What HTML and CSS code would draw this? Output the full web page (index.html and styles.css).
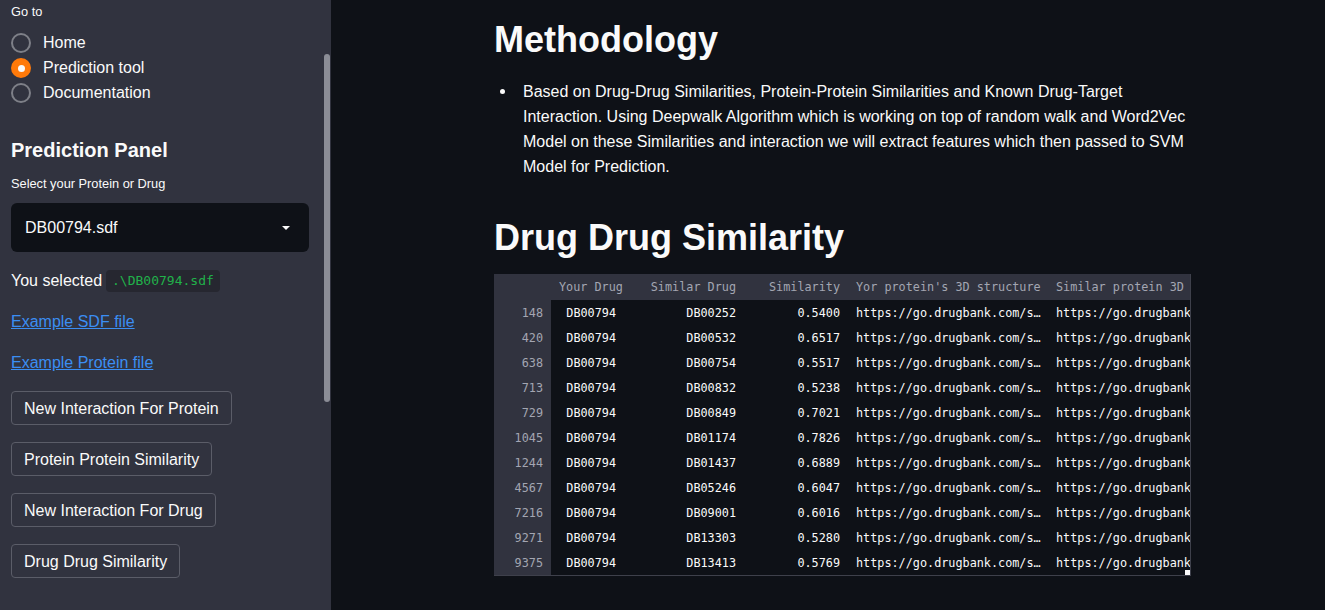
FILE: index.html
```html
<!DOCTYPE html>
<html lang="en">
<head>
<meta charset="utf-8">
<title>Prediction tool</title>
<link rel="stylesheet" href="styles.css">
</head>
<body>
<div class="app">
  <aside class="sidebar">
    <div class="label">Go to</div>
    <div class="radio-group">
      <div class="radio"><span class="dot"></span><span>Home</span></div>
      <div class="radio checked"><span class="dot"></span><span>Prediction tool</span></div>
      <div class="radio"><span class="dot"></span><span>Documentation</span></div>
    </div>
    <h2 class="panel-title">Prediction Panel</h2>
    <div class="label select-label">Select your Protein or Drug</div>
    <div class="select">
      <span>DB00794.sdf</span>
      <svg class="caret" width="10" height="6" viewBox="0 0 10 6"><path d="M1 1 L5 5 L9 1 Z" fill="#fafafa"/></svg>
    </div>
    <p class="selected">You selected <code>.\DB00794.sdf</code></p>
    <a class="link" href="#">Example SDF file</a>
    <a class="link" href="#">Example Protein file</a>
    <div class="buttons">
      <button class="btn">New Interaction For Protein</button>
      <button class="btn">Protein Protein Similarity</button>
      <button class="btn">New Interaction For Drug</button>
      <button class="btn">Drug Drug Similarity</button>
    </div>
    <div class="scroll-thumb"></div>
  </aside>
  <main class="main">
    <div class="content">
      <h1 class="h1">Methodology</h1>
      <ul class="bullets">
        <li>Based on Drug-Drug Similarities, Protein-Protein Similarities and Known Drug-Target Interaction. Using Deepwalk Algorithm which is working on top of random walk and Word2Vec Model on these Similarities and interaction we will extract features which then passed to SVM Model for Prediction.</li>
      </ul>
      <h1 class="h1 h1-second">Drug Drug Similarity</h1>
      <div class="grid">
        <table class="df">
          <colgroup>
            <col class="c-idx"><col class="c1"><col class="c2"><col class="c3"><col class="c4"><col class="c5">
          </colgroup>
          <thead>
            <tr><th class="idx"></th><th class="r">Your Drug</th><th class="r">Similar Drug</th><th class="r">Similarity</th><th>Yor protein's 3D structure</th><th>Similar protein 3D structure</th></tr>
          </thead>
          <tbody>
            <tr><td class="idx">148</td><td class="r">DB00794</td><td class="r">DB00252</td><td class="r">0.5400</td><td>https://go.drugbank.com/s…</td><td class="clip">https://go.drugbank.com/structures/DB00252</td></tr>
            <tr><td class="idx">420</td><td class="r">DB00794</td><td class="r">DB00532</td><td class="r">0.6517</td><td>https://go.drugbank.com/s…</td><td class="clip">https://go.drugbank.com/structures/DB00532</td></tr>
            <tr><td class="idx">638</td><td class="r">DB00794</td><td class="r">DB00754</td><td class="r">0.5517</td><td>https://go.drugbank.com/s…</td><td class="clip">https://go.drugbank.com/structures/DB00754</td></tr>
            <tr><td class="idx">713</td><td class="r">DB00794</td><td class="r">DB00832</td><td class="r">0.5238</td><td>https://go.drugbank.com/s…</td><td class="clip">https://go.drugbank.com/structures/DB00832</td></tr>
            <tr><td class="idx">729</td><td class="r">DB00794</td><td class="r">DB00849</td><td class="r">0.7021</td><td>https://go.drugbank.com/s…</td><td class="clip">https://go.drugbank.com/structures/DB00849</td></tr>
            <tr><td class="idx">1045</td><td class="r">DB00794</td><td class="r">DB01174</td><td class="r">0.7826</td><td>https://go.drugbank.com/s…</td><td class="clip">https://go.drugbank.com/structures/DB01174</td></tr>
            <tr><td class="idx">1244</td><td class="r">DB00794</td><td class="r">DB01437</td><td class="r">0.6889</td><td>https://go.drugbank.com/s…</td><td class="clip">https://go.drugbank.com/structures/DB01437</td></tr>
            <tr><td class="idx">4567</td><td class="r">DB00794</td><td class="r">DB05246</td><td class="r">0.6047</td><td>https://go.drugbank.com/s…</td><td class="clip">https://go.drugbank.com/structures/DB05246</td></tr>
            <tr><td class="idx">7216</td><td class="r">DB00794</td><td class="r">DB09001</td><td class="r">0.6016</td><td>https://go.drugbank.com/s…</td><td class="clip">https://go.drugbank.com/structures/DB09001</td></tr>
            <tr><td class="idx">9271</td><td class="r">DB00794</td><td class="r">DB13303</td><td class="r">0.5280</td><td>https://go.drugbank.com/s…</td><td class="clip">https://go.drugbank.com/structures/DB13303</td></tr>
            <tr><td class="idx">9375</td><td class="r">DB00794</td><td class="r">DB13413</td><td class="r">0.5769</td><td>https://go.drugbank.com/s…</td><td class="clip">https://go.drugbank.com/structures/DB13413</td></tr>
          </tbody>
        </table>
        <span class="resize-handle"></span>
      </div>
    </div>
  </main>
</div>
</body>
</html>
```

FILE: styles.css
```css
* { box-sizing: border-box; }
html, body {
  margin: 0;
  padding: 0;
  background: #0e1117;
  color: #fafafa;
  font-family: "Liberation Sans", Arial, sans-serif;
}
.app {
  display: flex;
  width: 1325px;
  height: 610px;
  overflow: hidden;
}

/* Sidebar */
.sidebar {
  position: relative;
  width: 331px;
  flex: 0 0 331px;
  background: #31333f;
  padding: 4px 0 0 11px;
  display: flex;
  flex-direction: column;
  align-items: flex-start;
}
.label {
  font-size: 12.8px;
  line-height: 16px;
  color: #fafafa;
}
.radio-group {
  margin-top: 10.5px;
  display: flex;
  flex-direction: column;
}
.radio {
  display: flex;
  align-items: center;
  height: 25px;
  font-size: 16px;
  gap: 12px;
}
.dot {
  width: 20px;
  height: 20px;
  border-radius: 50%;
  border: 2px solid #7e8088;
  display: inline-flex;
  align-items: center;
  justify-content: center;
  flex: none;
}
.radio.checked .dot {
  background: #ff7a0a;
  border-color: #ff7a0a;
}
.radio.checked .dot::after {
  content: "";
  width: 7px;
  height: 7px;
  border-radius: 50%;
  background: #fafafa;
}
.panel-title {
  margin: 32.5px 0 0;
  font-size: 20px;
  line-height: 24px;
  font-weight: 700;
}
.select-label { margin-top: 14px; }
.select {
  margin-top: 11px;
  width: 298px;
  height: 49px;
  background: #0e1117;
  border-radius: 6px;
  display: flex;
  align-items: center;
  justify-content: space-between;
  padding: 0 18px 0 14px;
  font-size: 16px;
}
.caret { display: block; }
.selected {
  margin: 17px 0 0;
  font-size: 16px;
  line-height: 24px;
  display: flex;
  align-items: center;
  gap: 4px;
}
.selected code {
  font-family: "DejaVu Sans Mono", monospace;
  font-size: 13px;
  color: #21b14a;
  background: #262730;
  border-radius: 4px;
  padding: 3px 6px;
  line-height: 16px;
}
.link {
  margin-top: 17px;
  font-size: 16px;
  line-height: 24px;
  color: #3b8ef3;
  text-decoration: underline;
}
.buttons {
  margin-top: 16px;
  display: flex;
  flex-direction: column;
  align-items: flex-start;
  gap: 17px;
}
.btn {
  font-family: "Liberation Sans", Arial, sans-serif;
  font-size: 16px;
  color: #fafafa;
  background: #31333f;
  border: 1px solid #5b5d68;
  border-radius: 4px;
  height: 34px;
  padding: 0 12px;
  line-height: 33px;
}
.scroll-thumb {
  position: absolute;
  right: 1px;
  top: 54px;
  width: 6px;
  height: 348px;
  border-radius: 3px;
  background: #8b8d96;
}

/* Main */
.main {
  flex: 1;
  min-width: 0;
}
.content {
  margin-left: 163px;
  width: 698px;
  padding-top: 18px;
}
.h1 {
  margin: 0;
  font-size: 36px;
  line-height: 43px;
  font-weight: 700;
}
.bullets {
  margin: 18px 0 0;
  padding-left: 29px;
  list-style: none;
  font-size: 16px;
  line-height: 25px;
}
.bullets li { position: relative; }
.bullets li::before {
  content: "";
  position: absolute;
  left: -23px;
  top: 10px;
  width: 5px;
  height: 5px;
  border-radius: 50%;
  background: #fafafa;
}
.h1-second { margin-top: 37px; }

.grid {
  position: relative;
  margin-top: 15px;
  width: 697px;
  height: 302px;
  overflow: hidden;
  border-right: 1px solid #3e404b;
  border-bottom: 1px solid #3e404b;
}
.df {
  border-collapse: collapse;
  table-layout: fixed;
  width: 754px;
  font-family: "DejaVu Sans Mono", monospace;
  font-size: 11.8px;
}
.c-idx { width: 57px; }
.c1 { width: 73px; }
.c2 { width: 120px; }
.c3 { width: 104px; }
.c4 { width: 200px; }
.c5 { width: 200px; }
.df th {
  height: 26px;
  background: #31333f;
  color: #a3a6b2;
  font-weight: 400;
  text-align: left;
  padding: 0 8px;
  white-space: nowrap;
  overflow: hidden;
}
.df td {
  height: 25px;
  padding: 0 8px;
  color: #fafafa;
  white-space: nowrap;
  overflow: hidden;
}
.df .r { text-align: right; }
.df td.idx {
  background: #31333f;
  color: #a3a6b2;
  text-align: right;
}
.resize-handle {
  position: absolute;
  right: 0;
  bottom: 0;
  width: 5px;
  height: 5px;
  background: #fafafa;
}
```
